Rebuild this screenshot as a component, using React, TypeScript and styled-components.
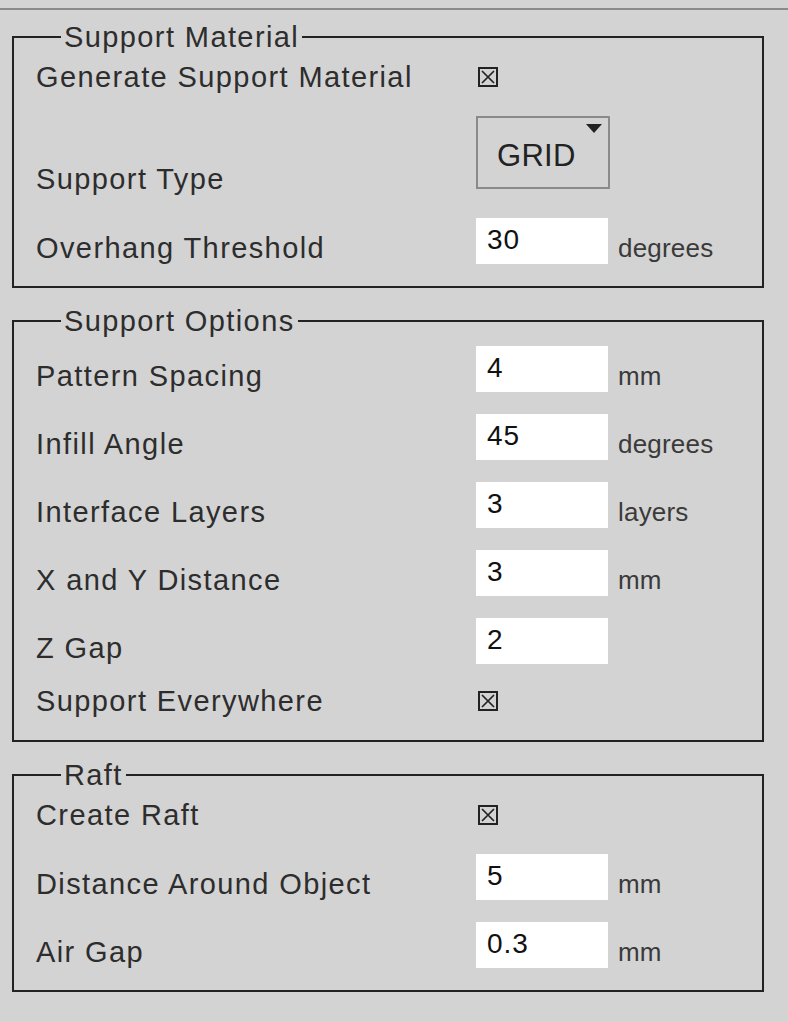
import { memo } from 'react';
import styled, { createGlobalStyle } from 'styled-components';

const GlobalStyle = createGlobalStyle`
  html, body {
    margin: 0;
    padding: 0;
    background: #d3d3d3;
  }
  body {
    font-family: 'Liberation Sans', Arial, sans-serif;
    color: #2d2d2d;
  }
`;

const Page = styled.div`
  min-height: 1022px;
  background: #d3d3d3;
`;

const TopRule = styled.div`
  margin-top: 8px;
  height: 2px;
  background: #8a8a8a;
`;

const Panel = styled.div`
  display: flex;
  flex-direction: column;
  gap: 18px;
  padding: 12px 24px 0 12px;
`;

const Group = styled.fieldset`
  margin: 0;
  width: 752px;
  box-sizing: border-box;
  min-inline-size: 0;
  border: 2px solid #222;
  padding: 10px 24px 22px 22px;
  display: flex;
  flex-direction: column;
  gap: 22px;
`;

const Legend = styled.legend`
  margin-left: 25px;
  padding: 0 3px;
  font-size: 29px;
  line-height: 30px;
  letter-spacing: 1.4px;
  color: #2d2d2d;
`;

const Row = styled.div<{ $h: number }>`
  display: grid;
  grid-template-columns: 440px 132px auto;
  align-items: start;
  height: ${(p) => p.$h}px;
`;

const Label = styled.span<{ $top: number }>`
  margin-top: ${(p) => p.$top}px;
  font-size: 29px;
  line-height: 30px;
  letter-spacing: 1.4px;
  white-space: nowrap;
  color: #2d2d2d;
`;

const Unit = styled.span`
  margin-top: 17px;
  margin-left: 10px;
  font-size: 26px;
  line-height: 26px;
  letter-spacing: 0.2px;
  color: #3a3a3a;
`;

const Field = styled.input`
  width: 132px;
  height: 46px;
  box-sizing: border-box;
  border: none;
  outline: none;
  background: #fff;
  padding: 8px 10px 10px 11px;
  font-family: 'Liberation Sans', Arial, sans-serif;
  font-size: 28px;
  line-height: 28px;
  letter-spacing: 1px;
  color: #111;
`;

const Check = styled.svg`
  display: block;
  margin: 5px 0 0 2px;
`;

const Select = styled.div`
  width: 134px;
  height: 73px;
  box-sizing: border-box;
  border: 2px solid #8a8a8a;
  border-top-right-radius: 1px;
  display: flex;
  justify-content: space-between;
  align-items: flex-start;
`;

const SelectText = styled.span`
  margin-top: 22px;
  padding-left: 19px;
  font-size: 31px;
  line-height: 31px;
  letter-spacing: 0.3px;
  color: #222;
`;

const Arrow = styled.svg`
  display: block;
  margin: 6px 6px 0 0;
`;

function CheckMark() {
  return (
    <Check width="20" height="20" viewBox="0 0 20 20">
      <rect x="1" y="1" width="18" height="18" fill="none" stroke="#222" strokeWidth="2" />
      <path d="M4 4 L16 16 M16 4 L4 16" stroke="#222" strokeWidth="1.7" />
    </Check>
  );
}

function ToggleRow({ label }: { label: string }) {
  return (
    <Row $h={32}>
      <Label $top={0}>{label}</Label>
      <CheckMark />
    </Row>
  );
}

function InputRow({ label, value, unit }: { label: string; value: string; unit?: string }) {
  return (
    <Row $h={46}>
      <Label $top={15}>{label}</Label>
      <Field defaultValue={value} />
      {unit && <Unit>{unit}</Unit>}
    </Row>
  );
}

function SelectRow({ label, value }: { label: string; value: string }) {
  return (
    <Row $h={80}>
      <Label $top={48}>{label}</Label>
      <Select>
        <SelectText>{value}</SelectText>
        <Arrow width="16" height="9" viewBox="0 0 16 9">
          <polygon points="0,0 16,0 8,9" fill="#222" />
        </Arrow>
      </Select>
    </Row>
  );
}

function App() {
  return (
    <Page>
      <GlobalStyle />
      <TopRule />
      <Panel>
        <Group>
          <Legend>Support Material</Legend>
          <ToggleRow label="Generate Support Material" />
          <SelectRow label="Support Type" value="GRID" />
          <InputRow label="Overhang Threshold" value="30" unit="degrees" />
        </Group>
        <Group>
          <Legend>Support Options</Legend>
          <InputRow label="Pattern Spacing" value="4" unit="mm" />
          <InputRow label="Infill Angle" value="45" unit="degrees" />
          <InputRow label="Interface Layers" value="3" unit="layers" />
          <InputRow label="X and Y Distance" value="3" unit="mm" />
          <InputRow label="Z Gap" value="2" />
          <ToggleRow label="Support Everywhere" />
        </Group>
        <Group>
          <Legend>Raft</Legend>
          <ToggleRow label="Create Raft" />
          <InputRow label="Distance Around Object" value="5" unit="mm" />
          <InputRow label="Air Gap" value="0.3" unit="mm" />
        </Group>
      </Panel>
    </Page>
  );
}

export default memo(App);
